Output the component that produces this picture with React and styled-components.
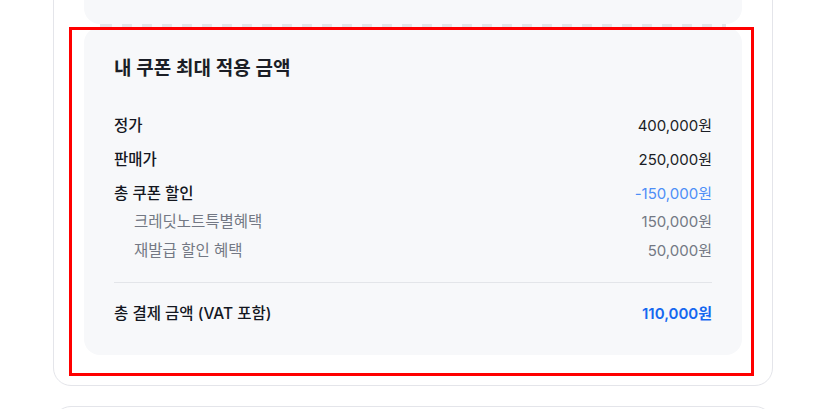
import React from 'react';
import styled, { createGlobalStyle } from 'styled-components';

const GlobalStyle = createGlobalStyle`
  html, body {
    margin: 0;
    padding: 0;
    background: #ffffff;
    overflow: hidden;
  }
  body {
    font-family: Inter, "Noto Sans CJK KR", "Noto Sans", sans-serif;
    color: #1b1e26;
    -webkit-font-smoothing: antialiased;
  }
`;

const Page = styled.div`
  position: relative;
  width: 720px;
  padding-left: 53px;
  margin-top: -61px;
  display: flex;
  flex-direction: column;
  gap: 20px;
`;

const Card = styled.section`
  background: #fff;
  border: 1px solid #e4e5ea;
  border-radius: 18px;
  padding: 30px;
  display: flex;
  flex-direction: column;
  min-height: ${({ $min }) => $min || 0}px;
`;

const TicketTop = styled.div`
  height: 54px;
  background: #f7f8fa;
  border-radius: 16px;
`;

const Perforation = styled.div`
  height: 3px;
  margin: 0 16px;
  background: repeating-linear-gradient(90deg, #e3e5e9 0 10px, #f7f8fa 10px 20px);
  background-position-x: 2px;
`;

const Panel = styled.div`
  background: #f7f8fa;
  border-radius: 16px;
  padding: 30px;
  display: flex;
  flex-direction: column;
`;

const Title = styled.h2`
  margin: 0 0 34px;
  font-size: 19px;
  line-height: 24px;
  font-weight: 600;
  color: #1b1e26;
`;

const Rows = styled.div`
  display: flex;
  flex-direction: column;
  gap: 12px;
`;

const Row = styled.div`
  display: flex;
  justify-content: space-between;
  align-items: center;
  font-size: 15.5px;
  line-height: 22px;
`;

const Label = styled.span`
  font-weight: 500;
  color: #14171f;
`;

const Value = styled.span`
  font-size: 15px;
  font-weight: ${({ $strong }) => ($strong ? 600 : 400)};
  color: ${({ $tone }) =>
    $tone === 'discount' ? '#4d8ef7' : $tone === 'total' ? '#1668f0' : '#1b1e26'};
`;

const SubList = styled.div`
  display: flex;
  flex-direction: column;
  gap: 8px;
  margin-top: -6px;
`;

const SubRow = styled.div`
  display: flex;
  justify-content: space-between;
  align-items: center;
  padding-left: 20px;
  font-size: 15.5px;
  line-height: 21px;
  color: #737884;

  span:last-child {
    font-size: 15px;
  }
`;

const Divider = styled.hr`
  border: none;
  height: 1px;
  background: #e3e5e9;
  margin: 21px 0 20px;
`;

const Highlight = styled.div`
  position: absolute;
  left: 69px;
  top: 88px;
  width: 679px;
  height: 343px;
  border: 3px solid #ff0000;
  pointer-events: none;
`;

const items = [
  { label: '정가', value: '400,000원' },
  { label: '판매가', value: '250,000원' },
];

const coupons = [
  { label: '크레딧노트특별혜택', value: '150,000원' },
  { label: '재발급 할인 혜택', value: '50,000원' },
];

export default function App() {
  return (
    <>
      <GlobalStyle />
      <Page>
        <Card>
          <TicketTop />
          <Perforation />
          <Panel>
            <Title>내 쿠폰 최대 적용 금액</Title>
            <Rows>
              {items.map((it) => (
                <Row key={it.label}>
                  <Label>{it.label}</Label>
                  <Value>{it.value}</Value>
                </Row>
              ))}
              <Row>
                <Label>총 쿠폰 할인</Label>
                <Value $tone="discount">-150,000원</Value>
              </Row>
              <SubList>
                {coupons.map((c) => (
                  <SubRow key={c.label}>
                    <span>{c.label}</span>
                    <span>{c.value}</span>
                  </SubRow>
                ))}
              </SubList>
            </Rows>
            <Divider />
            <Row>
              <Label>총 결제 금액 (VAT 포함)</Label>
              <Value $tone="total" $strong>110,000원</Value>
            </Row>
          </Panel>
        </Card>
        <Card $min={120} />
        <Highlight />
      </Page>
    </>
  );
}
